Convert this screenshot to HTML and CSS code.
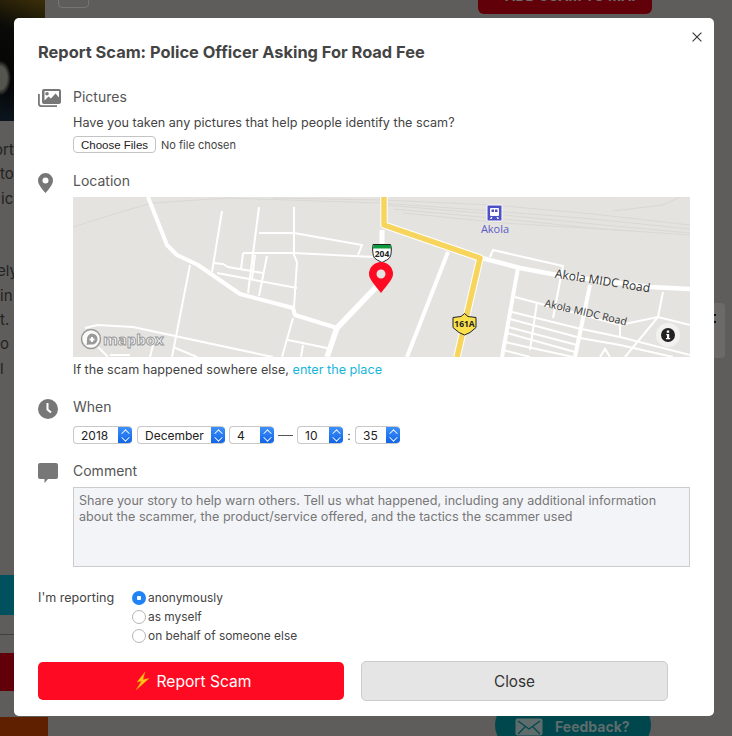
FILE: index.html
```html
<!DOCTYPE html>
<html lang="en">
  <head>
    <meta charset="UTF-8" />
    <meta name="viewport" content="width=device-width, initial-scale=1.0" />
    <title>Report Scam</title>
    <link rel="stylesheet" href="styles.css">
  </head>
  <body>
    <!-- Dimmed page behind the dialog -->
    <div class="page">
      <div class="page-photo"></div>
      <div class="page-text">
        <span>ort</span><span>to</span><span>ice</span><span>&nbsp;</span><span>&nbsp;</span>
        <span>ely</span><span>in</span><span>t.</span><span>o</span><span>l</span>
      </div>
      <div class="page-teal"></div>
      <div class="page-line"></div>
      <div class="page-red"></div>
      <div class="page-orange"></div>
      <div class="page-tool"></div>
      <div class="page-add">ADD SCAM TO MAP</div>
      <div class="page-side"></div>
      <div class="page-feedback">
        <svg width="28" height="18" viewBox="0 0 28 18" fill="none" stroke="#00474d" stroke-width="1.2">
          <rect x="0.5" y="0.5" width="27" height="17" rx="2" fill="#5e6c6c" stroke="none"/>
          <path d="M3 3l11 8 11-8M3 16l7-7M25 16l-7-7"/>
        </svg>
        <span>Feedback?</span>
      </div>
    </div>

    <!-- Report dialog -->
    <section class="modal">
      <button class="modal-close" type="button" aria-label="Close">
        <svg width="10" height="10" viewBox="0 0 10 10" fill="none" stroke="#333" stroke-width="1.1"><path d="M.6.6l8.8 8.8M9.4.6L.6 9.4"/></svg>
      </button>
      <h1>Report Scam: Police Officer Asking For Road Fee</h1>

      <div class="row row-pictures">
        <svg class="row-icon" width="23" height="18" viewBox="0 0 23 18">
          <path fill="#777" fill-rule="evenodd" d="M6 0h15a2 2 0 0 1 2 2v11a2 2 0 0 1-2 2H6a2 2 0 0 1-2-2V2a2 2 0 0 1 2-2zm.500 2v9.500l4-4 2.500 2 4.500-5 3.500 4V2zm2.500 1a1.800 1.800 0 1 1 0 3.600 1.800 1.800 0 0 1 0-3.600z"/>
          <path fill="none" stroke="#777" stroke-width="1.800" d="M.9 5v9.500c0 1.500 1 2.600 2.500 2.600H19"/>
        </svg>
        <div class="row-body">
          <div class="row-label">Pictures</div>
          <p class="row-help">Have you taken any pictures that help people identify the scam?</p>
          <input class="file-input" type="file" multiple />
        </div>
      </div>

      <div class="row row-location">
        <svg class="row-icon" width="15" height="20" viewBox="0 0 15 20">
          <path fill="#777" fill-rule="evenodd" d="M7.500 0A7.500 7.500 0 0 1 15 7.500C15 12 9.500 17.500 7.500 20 5.500 17.500 0 12 0 7.500A7.500 7.500 0 0 1 7.500 0zm0 4.500a3 3 0 1 0 0 6 3 3 0 0 0 0-6z"/>
        </svg>
        <div class="row-body">
          <div class="row-label">Location</div>
          <svg class="map" width="617" height="160" viewBox="0 0 617 160">
            <rect width="617" height="160" fill="#e4e3e0"/>
            <!-- rail lines -->
            <g fill="none" stroke="#d9d8d4" stroke-width="1">
              <path d="M0 30L54 13 80 6 154 1 307 6 420 14 520 22 617 32"/>
              <path d="M200 1L310 3 420 8 520 17 617 28"/>
              <path d="M311 8L420 17 520 27 617 36"/>
              <path d="M320 12L430 22 530 32 617 38"/>
              <path d="M330 16L430 26 560 34"/>
              <path d="M530 0L560 -2M540 14L590 8 620 -6"/>
            </g>
            <!-- small streets -->
            <g fill="none" stroke="#fff" stroke-width="2">
              <path d="M149 14L139 75"/>
              <path d="M186 10L175 96"/>
              <path d="M221 10V58L224 65 221 110"/>
              <path d="M186 36H221L289 48 285 58"/>
              <path d="M170 56H221L300 60"/>
              <path d="M170 56L168 72"/>
              <path d="M140 66L150 67 155 70 190 76"/>
              <path d="M144 76L224 91"/>
              <path d="M182 58L179 83"/>
              <path d="M194 59L186 99"/>
              <path d="M117 68L99 160"/>
              <path d="M12 131L24 128 60 130 200 160"/>
              <path d="M25 150L35 160"/>
              <path d="M37 158H57"/>
              <path d="M82 140L77 160"/>
              <path d="M100 150L124 160"/>
              <path d="M220 121L209 160"/>
              <path d="M215 143L254 151"/>
              <path d="M230 148L228 160"/>
              <path d="M417 60L420 53 490 69 480 121"/>
              <path d="M590 95L585 120"/>
              <path d="M442 100L547 128 585 120 617 128"/>
              <path d="M547 128V140L617 158"/>
              <path d="M585 120L552 160"/>
              <path d="M439 115L504 131 547 140"/>
              <path d="M437 122L504 140"/>
              <path d="M435 130L504 148"/>
              <path d="M434 136L502 155"/>
              <path d="M432 145L500 160"/>
              <path d="M430 153L457 160"/>
              <path d="M507 141L547 148 600 160"/>
              <path d="M464 105L457 153"/>
              <path d="M527 160L532 152 537 160"/>
            </g>
            <!-- main roads -->
            <g fill="none" stroke="#fff" stroke-linejoin="round">
              <path stroke-width="4" d="M75 0L94 48 104 58 125 68 167 97 220 111 222 118 264 131"/>
              <path stroke-width="5.500" d="M307 86L264 131 254 160"/>
              <path stroke-width="4" d="M375 55L334 160"/>
              <path stroke-width="4" d="M445 71L429 160"/>
              <path stroke-width="4" d="M517 88L502 160"/>
              <path stroke-width="4.500" d="M409 61L447 71 484 78 577 90 617 92"/>
              <path stroke-width="5" d="M309 33V60"/>
              <path stroke-width="7.500" d="M311 0V28L407 61 384 160"/>
              <path stroke="#f7d55c" stroke-width="5.500" d="M311 0V28L407 61 384 160"/>
            </g>
            <!-- station -->
            <rect x="414" y="8" width="15" height="16" rx="1" fill="#4f50c6" stroke="#fff"/>
            <path fill="#fff" d="M418 11h7a1 1 0 0 1 1 1v6a1 1 0 0 1-1 1h-7a1 1 0 0 1-1-1v-6a1 1 0 0 1 1-1zm.5 1.500v2.500h2.500v-2.500zm3.500 0v2.500h2.500v-2.500zM418 20h1.500l-1 2h-1.500zm5.500 0H425l1 2h-1.500z"/>
            <text class="map-station" x="422" y="36" text-anchor="middle">Akola</text>
            <!-- road names -->
            <text class="map-road" x="529" y="88" text-anchor="middle" transform="rotate(9 529 88)">Akola MIDC Road</text>
            <text class="map-road map-road-small" x="512" y="119" text-anchor="middle" transform="rotate(13 512 119)">Akola MIDC Road</text>
            <!-- shields -->
            <path fill="#fff" stroke="#222" stroke-width="1" d="M300 47.500h17.500c1 3 1 6 .5 9-.5 6-5 6.500-9 9-4-2.500-8.500-3-9-9-.5-3-.5-6 0-9z"/>
            <path fill="#0c9a3f" d="M300.500 48h17c.5 1 .5 2 .5 3.500h-18c0-1.500 0-2.500.5-3.500z"/>
            <text class="map-shield" x="309" y="60" text-anchor="middle">204</text>
            <path fill="#fbe04e" stroke="#222" stroke-width="1" d="M380 120.500l8-1 3.500-3 3.500 3 8 1v10l-6 5-5.500 2.500-5.500-2.500-6-5z"/>
            <text class="map-shield" x="391.500" y="130" text-anchor="middle">161A</text>
            <!-- pin -->
            <path fill="#fe0a23" fill-rule="evenodd" d="M308 65a12 12 0 0 1 12 12c0 5-5 10-12 19-7-9-12-14-12-19a12 12 0 0 1 12-12zm0 7.500a4.500 4.500 0 1 0 0 9 4.500 4.500 0 0 0 0-9z"/>
            <!-- attribution -->
            <circle cx="595" cy="138" r="12" fill="#fff" fill-opacity=".5"/>
            <circle cx="595" cy="138" r="7" fill="#222"/>
            <path fill="#fff" d="M593.800 133.500h2.400v2.200h-2.400zM593.300 137h2.900v4h1v1.300h-4.200V141h1v-2.700h-.7z"/>
            <circle cx="18" cy="142" r="9.500" fill="#fff" fill-opacity=".8" stroke="#9a9a9a" stroke-width="1.500"/>
            <path fill="#9a9a9a" d="M19 136.500a5.500 5.500 0 0 1 0 11c-1.800 0-3.400 0-5.500 .5.500-2 .500-3.700.500-5.500a5.500 5.500 0 0 1 5-6z"/>
            <path fill="#fff" d="M18 140h2v1.500h1.500v2H20V145h-2v-1.500h-1.500v-2H18z"/>
            <text class="map-logo" x="30" y="148">mapbox</text>
          </svg>
          <p class="row-note">If the scam happened sowhere else, <a href="#">enter the place</a></p>
        </div>
      </div>

      <div class="row row-when">
        <svg class="row-icon" width="20" height="20" viewBox="0 0 20 20">
          <circle cx="10" cy="10" r="10" fill="#777"/>
          <path fill="none" stroke="#fff" stroke-width="2" d="M9.500 4v6.500l3.500 3"/>
        </svg>
        <div class="row-body">
          <div class="row-label">When</div>
          <div class="date-fields">
            <label class="sel sel-year"><select><option>2018</option></select><span class="sel-arrow"></span></label>
            <label class="sel sel-month"><select><option>December</option></select><span class="sel-arrow"></span></label>
            <label class="sel sel-day"><select><option>4</option></select><span class="sel-arrow"></span></label>
            <span class="date-dash"></span>
            <label class="sel sel-hour"><select><option>10</option></select><span class="sel-arrow"></span></label>
            <span class="date-colon">:</span>
            <label class="sel sel-min"><select><option>35</option></select><span class="sel-arrow"></span></label>
          </div>
        </div>
      </div>

      <div class="row row-comment">
        <svg class="row-icon" width="20" height="20" viewBox="0 0 20 20">
          <path fill="#777" d="M2 0h16a2 2 0 0 1 2 2v12a2 2 0 0 1-2 2H10l-3.500 4V16H2a2 2 0 0 1-2-2V2a2 2 0 0 1 2-2z"/>
        </svg>
        <div class="row-body">
          <div class="row-label">Comment</div>
          <textarea placeholder="Share your story to help warn others. Tell us what happened, including any additional information about the scammer, the product/service offered, and the tactics the scammer used"></textarea>
        </div>
      </div>

      <div class="reporting">
        <div class="reporting-label">I'm reporting</div>
        <div class="reporting-options">
          <label><input type="radio" name="who" checked />anonymously</label>
          <label><input type="radio" name="who" />as myself</label>
          <label><input type="radio" name="who" />on behalf of someone else</label>
        </div>
      </div>

      <div class="actions">
        <button class="btn btn-report" type="button">
          <svg width="15" height="18" viewBox="0 0 15 18"><path fill="#ffc61a" stroke="#f08a00" stroke-width=".5" d="M10 0L2 10l4.500-.8L1 18 14 6.500 8 7.500z"/></svg>
          Report Scam
        </button>
        <button class="btn btn-close" type="button">Close</button>
      </div>
    </section>
  </body>
</html>
```

FILE: styles.css
```css
* { box-sizing: border-box; font-family: Inter, "Liberation Sans", sans-serif; }
html, body { margin: 0; height: 100%; }
body { background: #5e5d5b; overflow: hidden; position: relative; color: #444; }

/* page fragments behind the dialog */
.page { position: absolute; inset: 0; overflow: hidden; }
.page > div { position: absolute; }
.page-photo { left: 0; top: 0; width: 45px; height: 121px; background: radial-gradient(ellipse 10px 16px at 0 78px, #55554f 0 7px, transparent 11px), linear-gradient(200deg, #3c2f08, #0a0a08 30%, #050505 70%, #0c1620); }
.page-text { left: 0; top: 138px; width: 46px; display: flex; flex-direction: column; font: 15px/24.300px "Noto Sans", sans-serif; color: #222; }
.page-text span { white-space: nowrap; }
.page-text span:nth-child(1) { margin-left: -6px; }
.page-text span:nth-child(3) { margin-left: 1px; }
.page-text span:nth-child(6) { margin-left: -3px; }
.page-teal { left: 0; top: 575px; width: 48px; height: 40px; background: #00505e; }
.page-line { left: 0; top: 634px; width: 48px; height: 1px; background: #3f3f3f; }
.page-red { left: 0; top: 653px; width: 48px; height: 38px; background: #62000a; }
.page-orange { left: 0; top: 717px; width: 48px; height: 19px; background: #5f2000; }
.page-tool { left: 58px; top: -10px; width: 31px; height: 18px; border: 1px solid #757575; border-radius: 4px; }
.page-add { left: 478px; top: -20px; width: 174px; height: 34px; background: #62000a; border-radius: 6px; color: #6e6e6e; font-size: 14px; font-weight: 700; line-height: 32px; padding-left: 27px; white-space: nowrap; }
.page-side { left: 700px; top: 303px; width: 25px; height: 55px; background: #6b6a69; border-radius: 4px; }
.page-side::after { content: ""; position: absolute; left: 14px; top: 11px; width: 2px; height: 2px; background: #111; box-shadow: 0 7px #111; }
.page-feedback { left: 495px; top: 700px; width: 156px; height: 50px; background: #00474d; border-radius: 25px; display: flex; align-items: flex-start; gap: 12px; padding: 18px 0 0 20px; color: #5e6c6c; font-size: 14px; font-weight: 700; }

/* dialog */
.modal { position: absolute; left: 14px; top: 18px; width: 700px; height: 698px; background: #fff; border-radius: 5px; padding: 24px 24px 0; }
.modal h1 { margin: 0; font-size: 16.400px; line-height: 20px; font-weight: 700; color: #444; }
.modal-close { position: absolute; right: 12px; top: 14px; width: 10px; height: 10px; padding: 0; border: 0; background: none; display: flex; }

.row { display: grid; grid-template-columns: 35px 1fr; }
.row-icon { display: block; margin-top: 1px; }
.row-label { font-size: 14px; line-height: 18px; color: #555; }
.row-help, .row-note { margin: 0; font-size: 12.630px; line-height: 18px; color: #444; }
.row-pictures { margin-top: 26px; }
.row-help { margin-top: 8px; }
.file-input { display: block; margin-top: 4px; height: 17px; font-size: 11px; color: #444; width: 300px; }
.file-input::file-selector-button { height: 17px; width: 83px; padding: 0; margin-right: 5px; background: #fff; border: 1px solid #c4c4c4; border-radius: 4px; font-size: 11.500px; color: #222; }

.row-location { margin-top: 19px; }
.map { display: block; margin-top: 7px; }
.map-station { font: 11px "Open Sans", sans-serif; fill: #5a5cc8; }
.map-road { font: 12px "Open Sans", sans-serif; fill: #333; }
.map-road-small { font-size: 10.500px; }
.map-shield { font: 700 8.500px "Open Sans", sans-serif; fill: #222; }
.map-logo { font: 700 15px "Open Sans", sans-serif; fill: #fff; stroke: #999; stroke-width: 1; }
.row-note { margin-top: 4px; }
.row-note a { color: #17b5dc; text-decoration: none; }

.row-when { margin-top: 19px; }
.date-fields { display: flex; align-items: center; margin-top: 10px; height: 18px; }
.sel { display: flex; height: 18px; border: 1px solid #c8c8c8; border-right: 0; border-radius: 4px; overflow: hidden; background: #fff; }
.sel select { appearance: none; flex: 1; min-width: 0; border: 0; background: none; padding: 0 0 0 7px; font-size: 12px; color: #222; }
.sel-arrow { width: 14px; margin: -1px 0; background: linear-gradient(#3f92fb, #0f62e6); position: relative; }
.sel-arrow::before, .sel-arrow::after { content: ""; position: absolute; left: 4px; width: 6px; height: 6px; border: solid #fff; border-width: 1.200px 0 0 1.200px; }
.sel-arrow::before { top: 4px; transform: rotate(45deg) scale(.85); }
.sel-arrow::after { top: 8px; transform: rotate(225deg) scale(.85); }
.sel-year { width: 59px; margin-right: 5px; }
.sel-month { width: 88px; margin-right: 4px; }
.sel-day { width: 45px; }
.date-dash { width: 15px; height: 1px; background: #555; margin: 0 4px; }
.sel-hour { width: 46px; }
.date-colon { width: 12px; text-align: center; font-size: 12px; color: #444; }
.sel-min { width: 45px; }

.row-comment { margin-top: 18px; }
.row-comment textarea { display: block; width: 617px; height: 80px; margin-top: 7px; padding: 5px 5px; border: 1px solid #ccc; background: #f3f4f8; font-size: 12.600px; line-height: 16px; resize: none; }
.row-comment textarea::placeholder { color: #777; opacity: 1; }

.reporting { display: flex; margin-top: 21px; }
.reporting-label { width: 94px; padding-top: 1px; font-size: 12.600px; line-height: 18px; color: #444; }
.reporting-options { display: flex; flex-direction: column; }
.reporting-options label { display: flex; align-items: center; gap: 2px; height: 19px; font-size: 11.900px; color: #444; }
.reporting-options input { appearance: none; margin: 0; width: 14px; height: 14px; border: 1px solid #b5b5b5; border-radius: 50%; background: #fff; }
.reporting-options input:checked { border: 0; background: radial-gradient(circle, #fff 0 2px, #1f82f5 2.500px); }

.actions { display: flex; align-items: center; gap: 17px; margin-top: 16px; }
.btn { height: 38px; border-radius: 5px; font-size: 15.300px; display: flex; align-items: center; justify-content: center; gap: 7px; }
.btn-report { width: 306px; padding-left: 10px; background: #ff0a23; border: 0; color: #fff; font-size: 15.600px; }
.btn-close { width: 307px; height: 40px; background: #e5e5e5; border: 1px solid #ccc; color: #333; }
```
